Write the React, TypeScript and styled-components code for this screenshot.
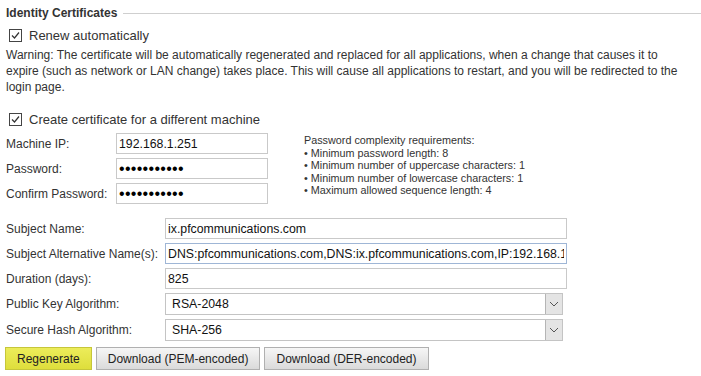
import { createGlobalStyle } from "styled-components";
import styled from "styled-components";

const GlobalStyle = createGlobalStyle`
  body {
    margin: 0;
    background: #ffffff;
    font-family: "Liberation Sans", Arial, sans-serif;
    color: #333333;
  }
`;

const requirements = [
  "Minimum password length: 8",
  "Minimum number of uppercase characters: 1",
  "Minimum number of lowercase characters: 1",
  "Maximum allowed sequence length: 4",
];

function CheckIcon() {
  return (
    <svg width="13" height="13" viewBox="0 0 13 13">
      <rect x="0.5" y="0.5" width="12" height="12" fill="#fff" stroke="#444" />
      <path d="M3 6.5 L5.5 9 L10 3.5" fill="none" stroke="#333" strokeWidth="1.2" />
    </svg>
  );
}

function Chevron() {
  return (
    <svg width="10" height="6" viewBox="0 0 10 6">
      <path d="M1 1 L5 5 L9 1" fill="none" stroke="#555" strokeWidth="1" />
    </svg>
  );
}

export default function App() {
  return (
    <Page>
      <GlobalStyle />
      <Legend>
        <LegendText>Identity Certificates</LegendText>
        <LegendLine />
      </Legend>

      <CheckRow>
        <CheckIcon />
        <span>Renew automatically</span>
      </CheckRow>
      <Warning>
        Warning: The certificate will be automatically regenerated and replaced
        for all applications, when a change that causes it to expire (such as
        network or LAN change) takes place. This will cause all applications to
        restart, and you will be redirected to the login page.
      </Warning>

      <CheckRow $top={17}>
        <CheckIcon />
        <span>Create certificate for a different machine</span>
      </CheckRow>

      <MachineBlock>
        <FieldGrid $labelWidth={110}>
          <Label>Machine IP:</Label>
          <TextInput $width={152} defaultValue="192.168.1.251" />
          <Label>Password:</Label>
          <PasswordInput $width={152} type="password" defaultValue="abcdefghijk" />
          <Label>Confirm Password:</Label>
          <PasswordInput $width={152} type="password" defaultValue="abcdefghijk" />
        </FieldGrid>
        <Requirements>
          <div>Password complexity requirements:</div>
          {requirements.map((r) => (
            <div key={r}>• {r}</div>
          ))}
        </Requirements>
      </MachineBlock>

      <FieldGrid $labelWidth={159} $top={14}>
        <Label>Subject Name:</Label>
        <TextInput $width={402} defaultValue="ix.pfcommunications.com" />
        <Label>Subject Alternative Name(s):</Label>
        <TextInput
          $width={402}
          $focused
          defaultValue="DNS:pfcommunications.com,DNS:ix.pfcommunications.com,IP:192.168.1.251"
        />
        <Label>Duration (days):</Label>
        <TextInput $width={402} defaultValue="825" />
        <Label>Public Key Algorithm:</Label>
        <SelectBox>
          <SelectValue>RSA-2048</SelectValue>
          <SelectArrow>
            <Chevron />
          </SelectArrow>
        </SelectBox>
        <Label>Secure Hash Algorithm:</Label>
        <SelectBox>
          <SelectValue>SHA-256</SelectValue>
          <SelectArrow>
            <Chevron />
          </SelectArrow>
        </SelectBox>
      </FieldGrid>

      <ButtonRow>
        <Button $primary>Regenerate</Button>
        <Button>Download (PEM-encoded)</Button>
        <Button>Download (DER-encoded)</Button>
      </ButtonRow>
    </Page>
  );
}

const Page = styled.div`
  width: 701px;
  height: 376px;
  padding: 6px 0 0 6px;
  box-sizing: border-box;
  overflow: hidden;
`;

const Legend = styled.div`
  display: flex;
  align-items: center;
  gap: 6px;
  height: 14px;
`;

const LegendText = styled.span`
  font-size: 12px;
  font-weight: bold;
  color: #333;
  white-space: nowrap;
`;

const LegendLine = styled.div`
  flex: 1;
  height: 1px;
  background: #cfcfcf;
`;

const CheckRow = styled.div<{ $top?: number }>`
  display: flex;
  align-items: center;
  gap: 7px;
  margin-top: ${(p) => p.$top ?? 8}px;
  padding-left: 3px;
  height: 15px;
  font-size: 13px;
  color: #333;
`;

const Warning = styled.p`
  margin: 4px 0 0;
  width: 680px;
  font-size: 12px;
  line-height: 16px;
  color: #333;
`;

const MachineBlock = styled.div`
  display: flex;
  align-items: flex-start;
  gap: 36px;
  margin-top: 6px;
`;

const FieldGrid = styled.div<{ $labelWidth: number; $top?: number }>`
  display: grid;
  grid-template-columns: ${(p) => p.$labelWidth}px auto;
  row-gap: 4px;
  align-items: center;
  justify-content: start;
  margin-top: ${(p) => p.$top ?? 0}px;
`;

const Label = styled.label`
  font-size: 12px;
  color: #333;
  white-space: nowrap;
`;

const TextInput = styled.input<{ $width: number; $focused?: boolean }>`
  width: ${(p) => p.$width}px;
  height: 21px;
  box-sizing: border-box;
  border: 1px solid ${(p) => (p.$focused ? "#9fb6d6" : "#c9c9c9")};
  padding: 0 2px;
  font-family: "Liberation Sans", Arial, sans-serif;
  font-size: 12.3px;
  color: #111;
  background: #fff;
  outline: none;
`;

const PasswordInput = styled(TextInput)`
  font-size: 16px;
  letter-spacing: 0.3px;
  color: #000;
`;

const Requirements = styled.div`
  margin-top: 1px;
  font-size: 10.8px;
  line-height: 12.5px;
  color: #333;
`;

const SelectBox = styled.div`
  display: flex;
  align-items: stretch;
  width: 398px;
  height: 22px;
  box-sizing: border-box;
  border: 1px solid #c4c4c4;
  background: #fff;
`;

const SelectValue = styled.span`
  flex: 1;
  display: flex;
  align-items: center;
  padding-left: 6px;
  font-size: 12.3px;
  color: #111;
`;

const SelectArrow = styled.span`
  width: 16px;
  display: flex;
  align-items: center;
  justify-content: center;
  background: #e4e4e4;
  border-left: 1px solid #b5b5b5;
`;

const ButtonRow = styled.div`
  display: flex;
  gap: 4px;
  margin: 6px 0 0 -1px;
`;

const Button = styled.button<{ $primary?: boolean }>`
  height: 23px;
  padding: 0 11px;
  font-family: "Liberation Sans", Arial, sans-serif;
  font-size: 12px;
  color: #222;
  border: 1px solid ${(p) => (p.$primary ? "#c6c63a" : "#b0b0b0")};
  background: ${(p) =>
    p.$primary
      ? "linear-gradient(#ecec5a, #dede3c)"
      : "linear-gradient(#f6f6f6, #dadada)"};
  border-radius: 0;
`;
